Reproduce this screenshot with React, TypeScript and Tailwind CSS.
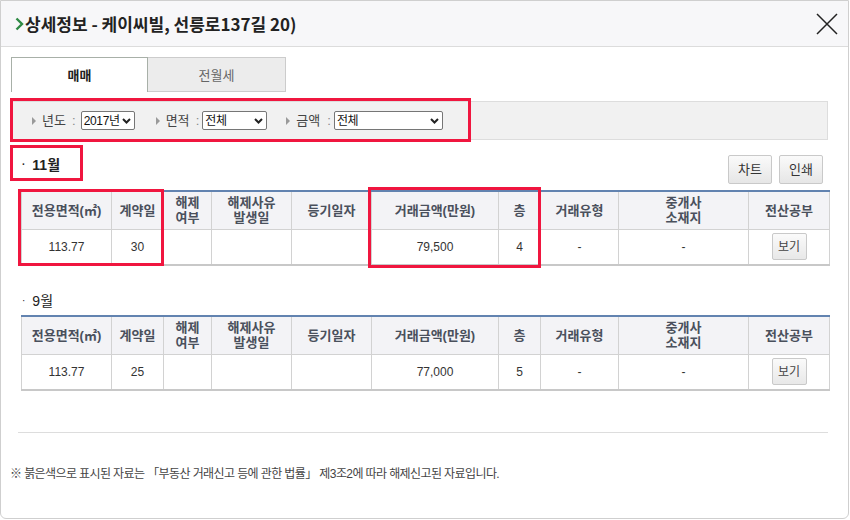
import React from 'react';

// ──────────────────────────────────────────────
// 실거래가 상세정보 팝업
// ──────────────────────────────────────────────

interface Deal {
  area: string;
  day: string;
  price: string;
  floor: string;
}

const COLS = [90, 52, 48, 80, 80, 127, 42, 78, 130, 81];

function Tri() {
  return (
    <svg width="4" height="8" viewBox="0 0 4 8" className="shrink-0">
      <polygon points="0,0 4,4 0,8" fill="#9a9a9a" />
    </svg>
  );
}

function FakeSelect({ value, width }: { value: string; width: string }) {
  return (
    <div
      className={`${width} flex h-[19px] items-center justify-between whitespace-nowrap rounded-[2px] border border-[#767676] bg-white pl-[2px] pr-[3px] text-[12px] leading-none text-[#111]`}
    >
      <span className="tracking-[-0.3px]">{value}</span>
      <svg width="9" height="6" viewBox="0 0 9 6" className="shrink-0">
        <polyline points="1,1 4.5,4.5 8,1" fill="none" stroke="#222" strokeWidth="2" />
      </svg>
    </div>
  );
}

function DealTable({ deal }: { deal: Deal }) {
  const th =
    'border-r border-b border-[#d2d2d2] bg-[#f3f3f6] text-[13px] font-bold leading-[15px] text-[#4a505c] text-center align-middle';
  const td = 'border-r border-[#d2d2d2] text-[12px] text-[#333] text-center align-middle';
  return (
    <table className="ml-[10px] w-[808px] table-fixed border-collapse border-t-2 border-b-2 border-l border-t-[#6283b0] border-b-[#c8c8c8] border-l-[#d2d2d2]">
      <colgroup>
        {COLS.map((w, i) => (
          <col key={i} style={{ width: w }} />
        ))}
      </colgroup>
      <thead>
        <tr className="h-[38px]">
          <th className={th}>전용면적(㎡)</th>
          <th className={th}>계약일</th>
          <th className={th}>
            해제
            <br />
            여부
          </th>
          <th className={th}>
            해제사유
            <br />
            발생일
          </th>
          <th className={th}>등기일자</th>
          <th className={th}>거래금액(만원)</th>
          <th className={th}>층</th>
          <th className={th}>거래유형</th>
          <th className={th}>
            중개사
            <br />
            소재지
          </th>
          <th className={th}>전산공부</th>
        </tr>
      </thead>
      <tbody>
        <tr className="h-[36px]">
          <td className={td}>{deal.area}</td>
          <td className={td}>{deal.day}</td>
          <td className={td}></td>
          <td className={td}></td>
          <td className={td}></td>
          <td className={td}>{deal.price}</td>
          <td className={td}>{deal.floor}</td>
          <td className={td}>-</td>
          <td className={td}>-</td>
          <td className={td}>
            <button className="mx-auto flex h-[27px] w-[35px] items-center justify-center rounded-[2px] border border-[#c9c9c9] bg-gradient-to-b from-[#fafafa] to-[#e8e8e8] text-[12px] text-[#444]">
              보기
            </button>
          </td>
        </tr>
      </tbody>
    </table>
  );
}

export default function App() {
  return (
    <div className="relative h-[520px] w-[850px] overflow-hidden bg-white font-['Liberation_Sans','Noto_Sans_CJK_KR',sans-serif] text-[#333]">
      <div className="flex h-[519px] w-[849px] flex-col rounded-b-[6px] border border-[#cfcfcf]">
        {/* 헤더 */}
        <div className="flex h-[46px] shrink-0 items-center justify-between border-b border-[#dcdcdc] bg-[#f7f7f9] pl-[14px] pr-[10px]">
          <div className="flex items-center">
            <svg width="9" height="14" viewBox="0 0 9 14" className="mr-[1px]">
              <polyline points="1.5,1.5 7,7 1.5,12.5" fill="none" stroke="#2f8a45" strokeWidth="2.4" />
            </svg>
            <span className="font-['Noto_Sans_CJK_KR',sans-serif] text-[17px] font-bold text-[#222]">
              상세정보 - 케이씨빌, 선릉로137길 20)
            </span>
          </div>
          <svg width="22" height="22" viewBox="0 0 22 22">
            <path d="M1 1 L21 21 M21 1 L1 21" stroke="#222" strokeWidth="1.5" />
          </svg>
        </div>

        <div className="pl-[10px] pr-[20px]">
          {/* 탭 */}
          <div className="mt-[10px] flex">
            <div className="flex h-[35px] w-[137px] items-center justify-center border border-b-0 border-[#a8b0a8] bg-white font-['Noto_Sans_CJK_KR',sans-serif] text-[13px] font-bold text-[#222]">
              매매
            </div>
            <div className="flex h-[35px] w-[138px] items-center justify-center border border-l-0 border-[#cccccc] bg-[#ececec] font-['Noto_Sans_CJK_KR',sans-serif] text-[13px] text-[#666]">
              전월세
            </div>
          </div>

          {/* 검색조건 */}
          <div className="ml-[1px] mt-[9px] flex h-[39px] w-[816px] items-center border border-[#dddddd] bg-[#f1f1f1] pl-[19px] text-[13px] text-[#444]">
            <Tri />
            <span className="ml-[6px] w-[26px]">년도</span>
            <span className="ml-[4px] text-[#888]">:</span>
            <div className="ml-[5px]">
              <FakeSelect value="2017년" width="w-[54px]" />
            </div>
            <div className="ml-[21px]">
              <Tri />
            </div>
            <span className="ml-[6px] w-[26px]">면적</span>
            <span className="ml-[4px] text-[#888]">:</span>
            <div className="ml-[3px]">
              <FakeSelect value="전체" width="w-[65px]" />
            </div>
            <div className="ml-[19px]">
              <Tri />
            </div>
            <span className="ml-[6px] w-[26px]">금액</span>
            <span className="ml-[5px] text-[#888]">:</span>
            <div className="ml-[3px]">
              <FakeSelect value="전체" width="w-[109px]" />
            </div>
          </div>

          {/* 11월 */}
          <div className="mt-[15px] flex h-[29px] items-start justify-between">
            <div className="ml-[11px] mt-[2px] flex items-center text-[14px] font-bold leading-[16px] text-[#222]">
              <span className="mr-[7px] text-[10px]">·</span>
              <span>11월</span>
            </div>
            <div className="flex gap-[7px] pr-[5px]">
              <button className="flex h-[29px] w-[44px] items-center justify-center rounded-[2px] border border-[#c9c9c9] bg-gradient-to-b from-[#fafafa] to-[#e6e6e6] text-[13px] text-[#333]">
                차트
              </button>
              <button className="flex h-[29px] w-[44px] items-center justify-center rounded-[2px] border border-[#c9c9c9] bg-gradient-to-b from-[#fafafa] to-[#e6e6e6] text-[13px] text-[#333]">
                인쇄
              </button>
            </div>
          </div>
          <div className="mt-[6px]">
            <DealTable deal={{ area: '113.77', day: '30', price: '79,500', floor: '4' }} />
          </div>

          {/* 9월 */}
          <div className="ml-[11px] mt-[27px] flex items-center text-[14px] leading-[16px] text-[#222]">
            <span className="mr-[7px] text-[10px]">·</span>
            <span>9월</span>
          </div>
          <div className="mt-[6px]">
            <DealTable deal={{ area: '113.77', day: '25', price: '77,000', floor: '5' }} />
          </div>

          <div className="ml-[7px] mt-[41px] h-px w-[810px] bg-[#dddddd]" />

          <p className="-ml-[1px] mt-[33px] whitespace-nowrap text-[12px] leading-[16px] tracking-[-0.6px] text-[#444]">
            ※ 붉은색으로 표시된 자료는 「부동산 거래신고 등에 관한 법률」 제3조2에 따라 해제신고된 자료입니다.
          </p>
        </div>
      </div>

      {/* 강조 표시 */}
      <div className="pointer-events-none absolute left-[10px] top-[98px] h-[44px] w-[461px] border-[3px] border-[#f0163f]" />
      <div className="pointer-events-none absolute left-[10px] top-[145px] h-[36px] w-[73px] border-[3px] border-[#f0163f]" />
      <div className="pointer-events-none absolute left-[18px] top-[189px] h-[77px] w-[146px] border-[3px] border-[#f0163f]" />
      <div className="pointer-events-none absolute left-[368px] top-[187px] h-[81px] w-[173px] border-[3px] border-[#f0163f]" />
    </div>
  );
}
